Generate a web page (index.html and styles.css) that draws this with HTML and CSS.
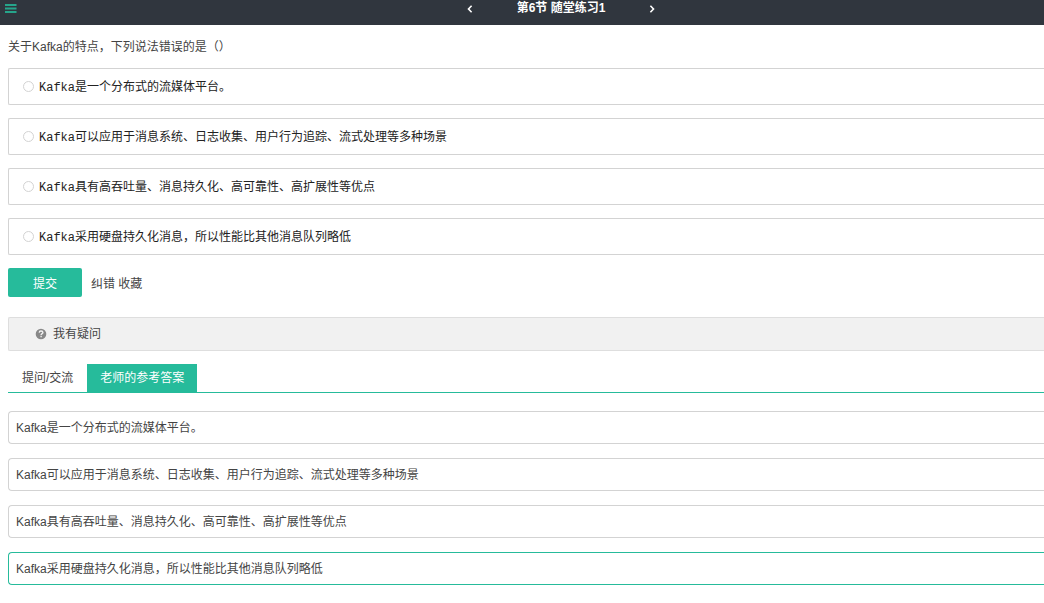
FILE: index.html
```html
<!DOCTYPE html>
<html lang="zh-CN">
<head>
<meta charset="utf-8">
<title>第6节 随堂练习1</title>
<link rel="stylesheet" href="styles.css">
</head>
<body>
<header class="topbar">
  <button class="icon-button menu" type="button" aria-label="目录">
    <svg width="12" height="10" viewBox="0 0 12 10" fill="currentColor"><path d="M0 0h11.500v2H0zM0 3.500h11.500v2H0zM0 7h11.500v2H0z"/></svg>
  </button>
  <nav class="pager">
    <button class="icon-button" type="button" aria-label="上一节">
      <svg width="6" height="8" viewBox="0 0 6 8" fill="none" stroke="currentColor" stroke-width="1.600"><path d="M4.600.800 1.500 4l3.100 3.200"/></svg>
    </button>
    <h1 class="title">第6节 随堂练习1</h1>
    <button class="icon-button" type="button" aria-label="下一节">
      <svg width="6" height="8" viewBox="0 0 6 8" fill="none" stroke="currentColor" stroke-width="1.600"><path d="M1.400.800 4.500 4 1.400 7.200"/></svg>
    </button>
  </nav>
</header>
<main class="content">
  <form>
    <fieldset class="quiz">
      <legend class="question">关于Kafka的特点，下列说法错误的是（）</legend>
      <label class="option"><input class="radio" type="radio" name="answer"><span class="option-text">Kafka是一个分布式的流媒体平台。</span></label>
      <label class="option"><input class="radio" type="radio" name="answer"><span class="option-text">Kafka可以应用于消息系统、日志收集、用户行为追踪、流式处理等多种场景</span></label>
      <label class="option"><input class="radio" type="radio" name="answer"><span class="option-text">Kafka具有高吞吐量、消息持久化、高可靠性、高扩展性等优点</span></label>
      <label class="option"><input class="radio" type="radio" name="answer"><span class="option-text">Kafka采用硬盘持久化消息，所以性能比其他消息队列略低</span></label>
    </fieldset>
    <div class="actions">
      <button class="submit" type="button">提交</button>
      <span class="links"><a class="link" href="#report">纠错</a> <a class="link" href="#favorite">收藏</a></span>
    </div>
  </form>
  <section class="doubt">
    <svg width="12" height="12" viewBox="0 0 12 12"><circle cx="6" cy="6" r="5.300" fill="#888"/><path d="M4.200 4.600C4.300 3.400 5 3 6 3c1.100 0 1.900.600 1.900 1.500C7.900 5.700 6.100 5.600 6.100 7" fill="none" stroke="#f1f1f1" stroke-width="1.400"/><path d="M5.400 7.800h1.400v1.400H5.400z" fill="#f1f1f1"/></svg>
    <span>我有疑问</span>
  </section>
  <div class="tabs" role="tablist">
    <button class="tab" type="button" role="tab" aria-selected="false">提问/交流</button>
    <button class="tab active" type="button" role="tab" aria-selected="true">老师的参考答案</button>
  </div>
  <ul class="answers">
    <li class="answer">Kafka是一个分布式的流媒体平台。</li>
    <li class="answer">Kafka可以应用于消息系统、日志收集、用户行为追踪、流式处理等多种场景</li>
    <li class="answer">Kafka具有高吞吐量、消息持久化、高可靠性、高扩展性等优点</li>
    <li class="answer correct">Kafka采用硬盘持久化消息，所以性能比其他消息队列略低</li>
  </ul>
</main>
</body>
</html>
```
FILE: styles.css
```css
* {
  box-sizing: border-box;
}

body {
  margin: 0;
  background: #fff;
  color: #444;
  font: 12px/17px "Liberation Sans", "Noto Sans CJK SC", sans-serif;
}

button {
  margin: 0;
  padding: 0;
  border: 0;
  background: none;
  color: inherit;
  font: inherit;
  cursor: pointer;
}

svg {
  display: block;
}

.topbar {
  display: grid;
  grid-template-columns: 1fr auto 1fr;
  align-items: start;
  height: 25px;
  background: #30363e;
  color: #fff;
}

.icon-button {
  display: flex;
  align-items: center;
  height: 18px;
}

.menu {
  justify-self: start;
  padding-left: 5px;
  color: #26a58b;
}

.pager {
  display: flex;
  gap: 44px;
  padding-left: 78px;
}

.title {
  margin: 0;
  font-size: 12px;
  line-height: 16px;
  font-weight: 700;
}

.content {
  padding: 14px 0 0 8px;
}

.quiz {
  display: grid;
  gap: 13px;
  min-width: 0;
  margin: 0;
  padding: 0;
  border: 0;
}

.question {
  padding: 0 0 12px;
}

.option {
  display: flex;
  align-items: center;
  gap: 5px;
  min-height: 37px;
  padding: 0 14px;
  border: 1px solid #d3d3d3;
  border-right: 0;
  border-radius: 2px 0 0 2px;
  color: #222;
  font-family: "Liberation Mono", "Noto Sans CJK SC", monospace;
}

.option-text {
  padding-top: 4px;
}

.radio {
  appearance: none;
  width: 11px;
  height: 11px;
  margin: 0;
  border: 1px solid #d3d3d3;
  border-radius: 50%;
}

.radio:checked {
  border-color: #26bb9b;
  background: #26bb9b;
}

.actions {
  display: flex;
  align-items: center;
  gap: 9px;
  margin-top: 13px;
}

.submit {
  width: 74px;
  height: 29px;
  padding-top: 3px;
  border-radius: 2px;
  background: #26bb9b;
  color: #fff;
}

.links {
  padding-top: 3px;
}

.link {
  color: inherit;
  text-decoration: none;
}

.doubt {
  display: flex;
  align-items: center;
  gap: 6px;
  min-height: 34px;
  margin-top: 20px;
  padding: 0 26px;
  border: 1px solid #dedede;
  border-right: 0;
  border-radius: 2px 0 0 2px;
  background: #f1f1f1;
}

.tabs {
  display: flex;
  margin-top: 13px;
  border-bottom: 1px solid #26bb9b;
}

.tab {
  height: 28px;
  padding: 0 14px;
}

.active {
  padding: 0 13px;
  background: #26bb9b;
  color: #fff;
}

.answers {
  display: grid;
  gap: 14px;
  margin: 18px 0 0;
  padding: 0;
  list-style: none;
}

.answer {
  padding: 8px 7px 6px;
  border: 1px solid #d3d3d3;
  border-right: 0;
  border-radius: 4px 0 0 4px;
}

.correct {
  border-color: #26bb9b;
}
```
